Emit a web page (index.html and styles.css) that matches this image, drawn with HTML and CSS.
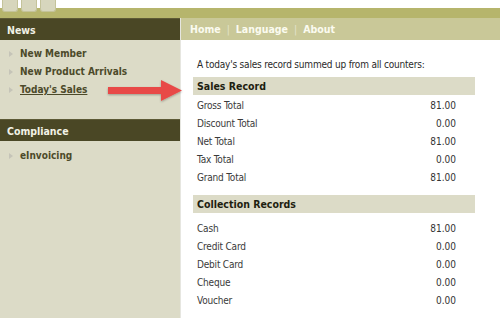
FILE: index.html
```html
<!DOCTYPE html>
<html>
<head>
<meta charset="utf-8">
<link rel="stylesheet" href="styles.css">
</head>
<body>
<div class="page">
  <div class="top">
    <div class="tabs"><span class="tab"></span><span class="tab"></span><span class="tab"></span></div>
    <div class="band"></div>
  </div>
  <div class="main">
    <aside class="side">
      <div class="side-head">News</div>
      <ul class="menu">
        <li>New Member</li>
        <li>New Product Arrivals</li>
        <li class="current">Today's Sales</li>
      </ul>
      <div class="side-head second">Compliance</div>
      <ul class="menu">
        <li>eInvoicing</li>
      </ul>
    </aside>
    <section class="content">
      <nav class="nav"><span>Home</span><span class="sep">|</span><span>Language</span><span class="sep">|</span><span>About</span></nav>
      <div class="body">
        <p class="intro">A today's sales record summed up from all counters:</p>
        <div class="box-head">Sales Record</div>
        <div class="rows first">
          <div class="row"><span>Gross Total</span><span>81.00</span></div>
          <div class="row"><span>Discount Total</span><span>0.00</span></div>
          <div class="row"><span>Net Total</span><span>81.00</span></div>
          <div class="row"><span>Tax Total</span><span>0.00</span></div>
          <div class="row"><span>Grand Total</span><span>81.00</span></div>
        </div>
        <div class="box-head">Collection Records</div>
        <div class="rows">
          <div class="row"><span>Cash</span><span>81.00</span></div>
          <div class="row"><span>Credit Card</span><span>0.00</span></div>
          <div class="row"><span>Debit Card</span><span>0.00</span></div>
          <div class="row"><span>Cheque</span><span>0.00</span></div>
          <div class="row"><span>Voucher</span><span>0.00</span></div>
        </div>
      </div>
    </section>
  </div>
  <svg class="arrow" width="80" height="26" viewBox="0 0 80 26">
    <defs>
      <filter id="sh" x="-10%" y="-20%" width="120%" height="150%">
        <feDropShadow dx="0" dy="1" stdDeviation="1" flood-color="#000" flood-opacity="0.3"/>
      </filter>
    </defs>
    <path d="M3 9 H56 V2 L77 12.5 L56 23 V16 H3 Z" fill="#e84a47" filter="url(#sh)"/>
  </svg>
</div>
</body>
</html>
```
FILE: styles.css
```css
* { box-sizing: border-box; }
html, body { margin: 0; padding: 0; background: #fff; }
body { font-family: "DejaVu Sans Condensed", "DejaVu Sans", sans-serif; font-size: 10px; color: #2a2a2a; }
.page { position: relative; width: 500px; height: 327px; overflow: hidden; }
.top { position: relative; height: 18px; padding-top: 8px; }
.band { height: 10px; background: #b6b56c; }
.tabs { position: absolute; left: 2px; top: 0; display: flex; gap: 3px; }
.tab { width: 16px; height: 12px; background: #d7d6bd; border: 1px solid #c4c39a; border-top: none; border-radius: 0 0 3px 3px; }
.main { display: grid; grid-template-columns: 180px 1fr; height: 300px; }
.side { background: #dcdbc7; }
.side-head { height: 22px; background: #4a4725; color: #f2f2e6; font-weight: bold; font-size: 10.5px; line-height: 22px; padding-left: 7px; border-top: 1px solid #5d5a36; }
.side-head.second { margin-top: 20px; }
.menu { list-style: none; margin: 0; padding: 5px 0 0 0; }
.second + .menu { padding-top: 6px; }
.menu li { position: relative; height: 18px; line-height: 18px; padding-left: 20px; font-weight: bold; font-size: 10px; color: #4c4a2a; }
.menu li::before { content: ""; position: absolute; left: 9px; top: 6px; border-left: 4px solid #c5c4b8; border-top: 3px solid transparent; border-bottom: 3px solid transparent; }
.menu li.current { text-decoration: underline; }
.content { border-left: 1px solid #e6e6e0; }
.nav { height: 22px; background: #c9c898; color: #fbfbf0; font-weight: bold; font-size: 10.5px; line-height: 22px; padding-left: 9px; display: flex; gap: 6px; }
.nav .sep { font-weight: normal; color: #e4e3cc; }
.body { padding: 17px 25px 0 12px; letter-spacing: -0.2px; }
.intro { margin: 0 0 4px 4px; line-height: 16px; }
.box-head { height: 18px; line-height: 18px; background: #dcdbc7; font-weight: bold; font-size: 10.5px; color: #1e1e10; padding-left: 4px; letter-spacing: 0; }
.rows { padding: 7px 19px 0 4px; }
.rows.first { padding-top: 2px; padding-bottom: 8px; }
.row { display: flex; justify-content: space-between; height: 18px; line-height: 18px; color: #3a3a3a; }
.row span:last-child { color: #333; letter-spacing: 0; }
.arrow { position: absolute; left: 105px; top: 78px; }
```
